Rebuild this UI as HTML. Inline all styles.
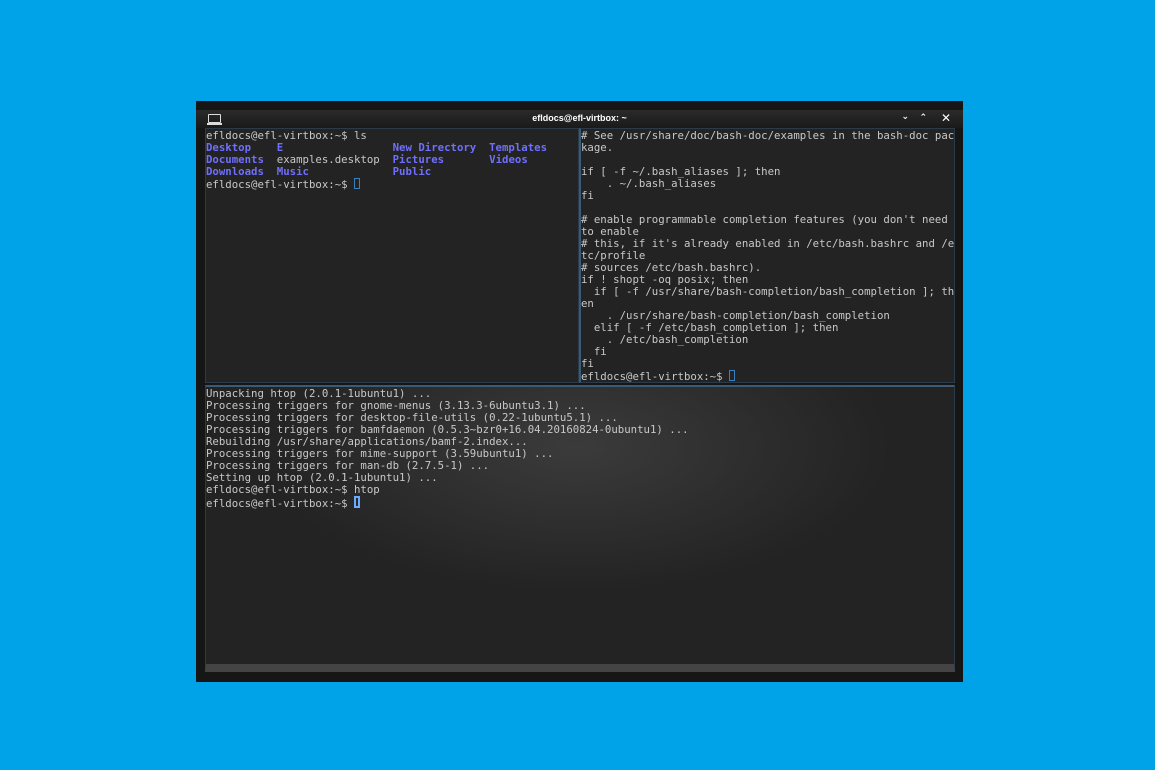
<!DOCTYPE html>
<html><head><meta charset="utf-8"><style>
html,body{margin:0;padding:0;width:1155px;height:770px;background:#00a2e8;overflow:hidden}
.win{position:absolute;left:196px;top:101px;width:767px;height:581px;background:#161616;}
.title{position:absolute;left:0;top:9px;width:767px;height:18px;background:linear-gradient(#2a2a2a,#1a1a1a);}
.title .t{position:absolute;left:0;right:0;top:3px;text-align:center;font:bold 9px "Liberation Sans",sans-serif;color:#fff}
.pane{position:absolute;background:#232323;font:10.7px/12px "DejaVu Sans Mono",monospace;color:#c8c8c8;white-space:pre;overflow:hidden;box-sizing:border-box;padding:1px 0 0 0}
.b{color:#6f6fff;font-weight:bold}
.cur{display:inline-block;width:4px;height:9px;border:1px solid #3a7fc0;vertical-align:-1px;line-height:0}
</style></head><body>
<div class="win">
<div class="title"><div class="t">efldocs@efl-virtbox: ~</div>
<div style="position:absolute;left:12px;top:4px;width:11px;height:7px;border:1.5px solid #ddd;border-radius:1px"></div>
<div style="position:absolute;left:11px;top:13px;width:15px;height:2px;background:#ddd"></div>
<div style="position:absolute;right:54px;top:2px;color:#fff;font:bold 9px 'DejaVu Sans'">⌄</div>
<div style="position:absolute;right:36px;top:3px;color:#fff;font:bold 9px 'DejaVu Sans'">⌃</div>
<div style="position:absolute;right:12px;top:1px;color:#fff;font:bold 12px 'DejaVu Sans'">✕</div>
</div>
<div class="pane" style="left:9px;top:27px;width:374px;height:255px;border:1px solid #2b3a48">efldocs@efl-virtbox:~$ ls
<span class="b">Desktop    E                 New Directory  Templates</span>
<span class="b">Documents</span>  examples.desktop  <span class="b">Pictures       Videos</span>
<span class="b">Downloads  Music             Public</span>
efldocs@efl-virtbox:~$ <span class="cur"></span></div>
<div class="pane" style="left:383px;top:27px;width:376px;height:255px;border:1px solid #2b3a48;border-left:2px solid #3a5a78"># See /usr/share/doc/bash-doc/examples in the bash-doc pac
kage.

if [ -f ~/.bash_aliases ]; then
    . ~/.bash_aliases
fi

# enable programmable completion features (you don't need
to enable
# this, if it's already enabled in /etc/bash.bashrc and /e
tc/profile
# sources /etc/bash.bashrc).
if ! shopt -oq posix; then
  if [ -f /usr/share/bash-completion/bash_completion ]; th
en
    . /usr/share/bash-completion/bash_completion
  elif [ -f /etc/bash_completion ]; then
    . /etc/bash_completion
  fi
fi
efldocs@efl-virtbox:~$ <span class="cur"></span></div>
<div class="pane" style="left:9px;top:284px;width:750px;height:287px;border:1px solid #2b3a48;border-top:2px solid #3a5a78;background:radial-gradient(ellipse 350px 160px at 370px 60px,#3b3b3b,#232323 90%);border-bottom:8px solid #444">Unpacking htop (2.0.1-1ubuntu1) ...
Processing triggers for gnome-menus (3.13.3-6ubuntu3.1) ...
Processing triggers for desktop-file-utils (0.22-1ubuntu5.1) ...
Processing triggers for bamfdaemon (0.5.3~bzr0+16.04.20160824-0ubuntu1) ...
Rebuilding /usr/share/applications/bamf-2.index...
Processing triggers for mime-support (3.59ubuntu1) ...
Processing triggers for man-db (2.7.5-1) ...
Setting up htop (2.0.1-1ubuntu1) ...
efldocs@efl-virtbox:~$ htop
efldocs@efl-virtbox:~$ <span class="cur" style="border-color:#6aaaff;border-width:2px;width:2px;height:8px"></span></div>
</div>
</body></html>
